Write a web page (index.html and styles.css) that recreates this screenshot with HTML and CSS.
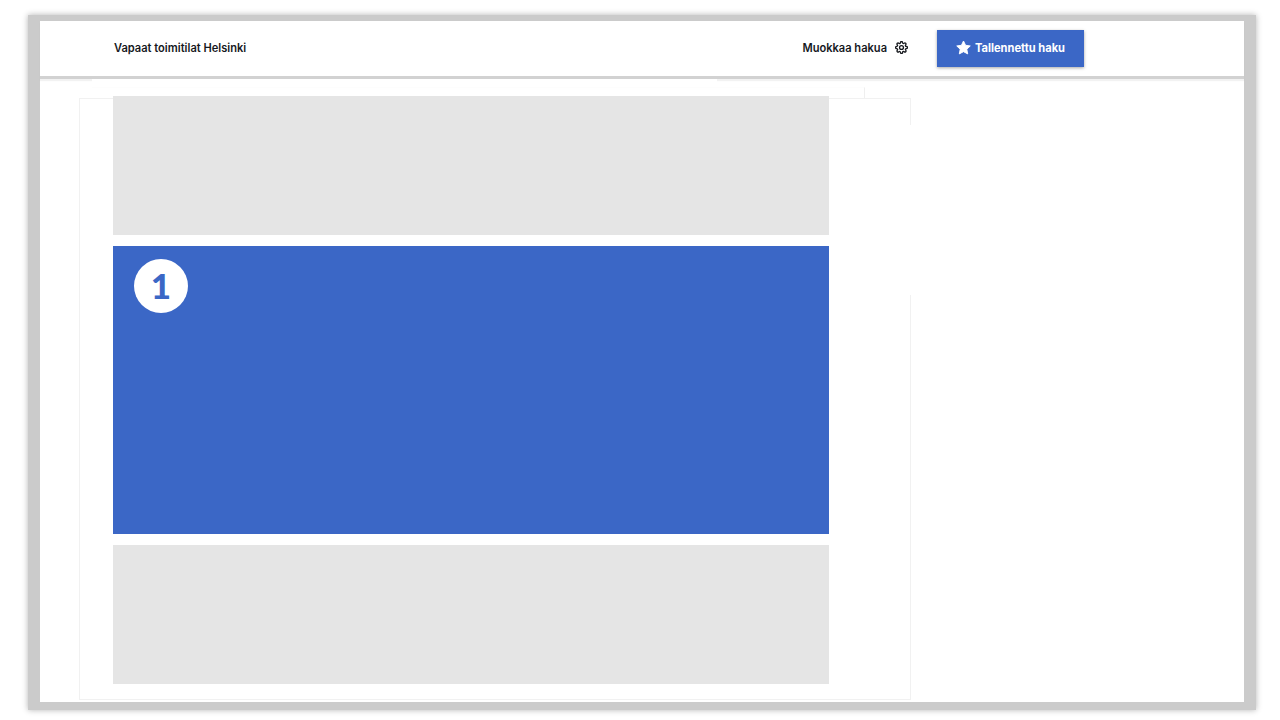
FILE: index.html
```html
<!DOCTYPE html>
<html lang="en">
<head>
  <meta charset="UTF-8" />
  <title>Vapaat toimitilat Helsinki</title>
  <link rel="stylesheet" href="styles.css">
</head>
<body>

  <div class="frame">

    <!-- Header -->
    <header class="topbar">
      <span class="search-title">Vapaat toimitilat Helsinki</span>
      <div class="topbar-actions">
        <a class="edit-link" href="#">
          Muokkaa hakua
          <svg class="gear" viewBox="0 0 24 24" fill="none" stroke="#16181d" stroke-width="2.4" stroke-linejoin="round">
            <circle cx="12" cy="12" r="3.6"/>
            <path d="M19.4 15a1.65 1.65 0 0 0 .33 1.82l.06.06a2 2 0 0 1 0 2.83 2 2 0 0 1-2.83 0l-.06-.06a1.65 1.65 0 0 0-1.82-.33 1.65 1.65 0 0 0-1 1.51V21a2 2 0 0 1-2 2 2 2 0 0 1-2-2v-.09A1.65 1.65 0 0 0 9 19.4a1.65 1.65 0 0 0-1.82.33l-.06.06a2 2 0 0 1-2.83 0 2 2 0 0 1 0-2.83l.06-.06a1.65 1.65 0 0 0 .33-1.82 1.65 1.65 0 0 0-1.51-1H3a2 2 0 0 1-2-2 2 2 0 0 1 2-2h.09A1.65 1.65 0 0 0 4.6 9a1.65 1.65 0 0 0-.33-1.82l-.06-.06a2 2 0 0 1 0-2.83 2 2 0 0 1 2.83 0l.06.06a1.65 1.65 0 0 0 1.82.33H9a1.65 1.65 0 0 0 1-1.51V3a2 2 0 0 1 2-2 2 2 0 0 1 2 2v.09a1.65 1.65 0 0 0 1 1.51 1.65 1.65 0 0 0 1.82-.33l.06-.06a2 2 0 0 1 2.83 0 2 2 0 0 1 0 2.83l-.06.06a1.65 1.65 0 0 0-.33 1.82V9a1.65 1.65 0 0 0 1.51 1H21a2 2 0 0 1 2 2 2 2 0 0 1-2 2h-.09a1.65 1.65 0 0 0-1.51 1z"/>
          </svg>
        </a>
        <button class="saved-btn">
          <svg class="star" viewBox="0 0 24 24" fill="#fff">
            <path d="M12 1.6l3.3 6.9 7.5 1-5.5 5.2 1.4 7.5L12 18.6l-6.7 3.6 1.4-7.5L1.2 9.5l7.5-1z" stroke="#fff" stroke-width="1.5" stroke-linejoin="round"/>
          </svg>
          Tallennettu haku
        </button>
      </div>
    </header>

    <!-- Content -->
    <div class="shadow-cover"></div>
    <div class="back-edge"></div>
    <div class="panel">
      <div class="slot"></div>
      <div class="slot slot-active">
        <span class="step-badge">1</span>
      </div>
      <div class="slot"></div>
      <div class="panel-gap"></div>
    </div>

  </div>

</body>
</html>
```

FILE: styles.css
```css
html, body {
  margin: 0;
  height: 100%;
  background-color: white;
  overflow: hidden;
}

body {
  font-family: Inter, "Liberation Sans", sans-serif;
}

.frame {
  position: relative;
  box-sizing: border-box;
  width: 1228px;
  height: 695px;
  margin: 15px 0 0 28px;
  border-style: solid;
  border-color: #cbcbcb;
  border-width: 6px 12px 8px 12px;
  background-color: white;
  box-shadow: 0 0 6px rgba(0, 0, 0, 0.3);
}

.topbar {
  display: flex;
  justify-content: space-between;
  align-items: center;
  box-sizing: border-box;
  height: 58px;
  padding: 0 160px 2px 74px;
  border-bottom: 3px solid #d2d2d2;
  box-shadow: 0 2px 1px rgba(0, 0, 0, 0.05);
  color: #16181d;
  font-size: 11.1px;
  font-weight: 600;
}

.topbar-actions {
  display: flex;
  align-items: center;
}

.edit-link {
  display: flex;
  align-items: center;
  gap: 8px;
  margin-right: 29px;
  color: #16181d;
  text-decoration: none;
}

.gear {
  width: 13px;
  height: 13px;
}

.saved-btn {
  display: flex;
  justify-content: center;
  align-items: center;
  gap: 4px;
  width: 147px;
  height: 37px;
  margin-top: 1px;
  padding: 0 0 1px;
  border: none;
  background-color: #3b67c6;
  color: white;
  font-family: inherit;
  font-size: 11.1px;
  font-weight: 700;
  box-shadow: 0 1px 3px rgba(0, 0, 0, 0.35);
}

.star {
  width: 15px;
  height: 15px;
  margin-top: -1px;
}

.shadow-cover {
  position: absolute;
  top: 58px;
  left: 52px;
  width: 625px;
  height: 4px;
  background-color: white;
}

.back-edge {
  position: absolute;
  top: 66px;
  left: 52px;
  width: 772px;
  height: 11px;
  border-top: 1px solid #fdfdfd;
  border-right: 1px solid #efefef;
}

.panel {
  position: relative;
  box-sizing: border-box;
  width: 832px;
  height: 602px;
  margin: 19px 0 0 39px;
  padding: 0 81px 0 33px;
  border: 1px solid #f1f1f1;
  background-color: white;
}

.panel-gap {
  position: absolute;
  top: 26px;
  right: -1px;
  width: 1px;
  height: 170px;
  background-color: white;
}

.slot {
  height: 139px;
  margin-bottom: 11px;
  background-color: #e5e5e5;
}

.panel .slot:first-child {
  margin-top: -3px;
}

.slot-active {
  height: 288px;
  padding: 13px 0 0 21px;
  box-sizing: border-box;
  background-color: #3b67c6;
}

.step-badge {
  display: flex;
  justify-content: center;
  align-items: center;
  box-sizing: border-box;
  width: 54px;
  height: 54px;
  padding-bottom: 2px;
  border-radius: 50%;
  background-color: white;
  color: #3b67c6;
  font-family: Lato, sans-serif;
  font-size: 35px;
  font-weight: 900;
}
```
